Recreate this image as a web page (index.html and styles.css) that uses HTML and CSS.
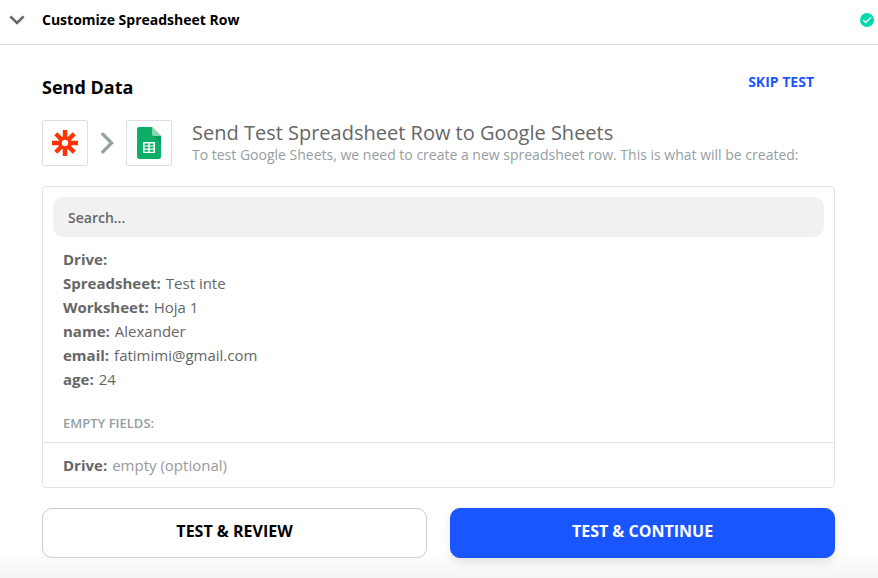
FILE: index.html
```html
<!DOCTYPE html>
<html lang="en">
<head>
<meta charset="utf-8">
<title>Send Data</title>
<link rel="stylesheet" href="styles.css">
</head>
<body>
<header class="step-header">
  <button class="step-toggle" type="button">
    <svg class="chevron" width="16" height="10" viewBox="0 0 16 10" aria-hidden="true"><path d="M1.300 1.300 8 8l6.700-6.700" fill="none" stroke="#666" stroke-width="2.600"/></svg>
    <span>Customize Spreadsheet Row</span>
  </button>
  <svg class="status" width="14" height="14" viewBox="0 0 14 14" aria-hidden="true"><circle cx="7" cy="7" r="7" fill="#00d9ae"/><path d="M3 7 5.700 9.500 11 4.200" fill="none" stroke="#fff" stroke-width="1.300"/></svg>
</header>
<main class="panel">
  <div class="title-row">
    <h1 class="title">Send Data</h1>
    <a class="skip" href="#">SKIP TEST</a>
  </div>
  <section class="intro">
    <span class="app-icon">
      <svg width="26" height="26" viewBox="0 0 26 26" aria-hidden="true">
        <path d="M13 0v9M13 17v9M0 13h9M17 13h9M3.800 3.800l6.400 6.400M15.800 15.800l6.400 6.400M22.200 3.800l-6.400 6.400M10.200 15.800l-6.400 6.400" stroke="#ff3300" stroke-width="4.400"/>
        <circle cx="13" cy="13" r="5" fill="none" stroke="#ff3300" stroke-width="3.600"/>
      </svg>
    </span>
    <svg class="arrow" width="14" height="22" viewBox="0 0 14 22" aria-hidden="true"><path d="M2.800 2.200 11.600 11 2.800 19.800" fill="none" stroke="#959ea2" stroke-width="3.300" stroke-linecap="round"/></svg>
    <span class="app-icon">
      <svg width="24" height="32" viewBox="0 0 24 32" aria-hidden="true">
        <path d="M2.200 0H15l9 9v20.800A2.200 2.200 0 0 1 21.800 32H2.200A2.200 2.200 0 0 1 0 29.800V2.200A2.200 2.200 0 0 1 2.200 0z" fill="#0caf66"/>
        <path d="M15.600 8.400 24 16.500V9z" fill="#089b59"/>
        <path d="M15 0l9 9h-7a2 2 0 0 1-2-2z" fill="#8bd6b2"/>
        <path d="M6 15h12v11H6zM7.500 16.500v2h3.800v-2zm5.200 0v2h3.800v-2zM7.500 19.600v2h3.800v-2zm5.200 0v2h3.800v-2zM7.500 22.700v2h3.800v-2zm5.200 0v2h3.800v-2z" fill="#fff" fill-rule="evenodd"/>
      </svg>
    </span>
    <div class="intro-text">
      <h2 class="intro-title">Send Test Spreadsheet Row to Google Sheets</h2>
      <p class="intro-note">To test Google Sheets, we need to create a new spreadsheet row. This is what will be created:</p>
    </div>
  </section>
  <section class="card">
    <input class="search" type="text" placeholder="Search..." aria-label="Search">
    <dl class="fields">
      <div><dt>Drive:</dt></div>
      <div><dt>Spreadsheet:</dt><dd>Test inte</dd></div>
      <div><dt>Worksheet:</dt><dd>Hoja 1</dd></div>
      <div><dt>name:</dt><dd>Alexander</dd></div>
      <div><dt>email:</dt><dd>fatimimi@gmail.com</dd></div>
      <div><dt>age:</dt><dd>24</dd></div>
    </dl>
    <h3 class="empty-title">EMPTY FIELDS:</h3>
    <dl class="fields empty">
      <div><dt>Drive:</dt><dd>empty (optional)</dd></div>
    </dl>
  </section>
  <div class="actions">
    <button class="btn" type="button">TEST &amp; REVIEW</button>
    <button class="btn primary" type="button">TEST &amp; CONTINUE</button>
  </div>
</main>
</body>
</html>
```
FILE: styles.css
```css
* { box-sizing: border-box; }
body, h1, h2, h3, p, dl, dd { margin: 0; }
body {
  font-family: "Open Sans", sans-serif;
  font-size: 15px;
  line-height: 24px;
  color: #666;
  background: #fff;
}
button, input { font: inherit; }
.step-header {
  display: flex;
  justify-content: space-between;
  align-items: center;
  height: 45px;
  padding: 0 4px 5px 9px;
  border-bottom: 1px solid #d9dde1;
}
.step-toggle {
  display: flex;
  align-items: center;
  gap: 17px;
  padding: 0;
  border: 0;
  background: none;
  color: #000;
  font-size: 14px;
  font-weight: 700;
}
.panel {
  padding: 24px 43px 20px 42px;
  background: linear-gradient(to top, #f4f4f4, #fff 28px);
}
.title-row {
  display: flex;
  justify-content: space-between;
  align-items: flex-start;
  padding-right: 21px;
}
.title {
  padding-top: 5px;
  color: #000;
  font-size: 18px;
  line-height: 26px;
  font-weight: 700;
}
.skip {
  padding-top: 1px;
  color: #1a56ff;
  font-size: 14px;
  font-weight: 700;
  text-decoration: none;
}
.intro {
  display: flex;
  align-items: center;
  margin-top: 20px;
}
.app-icon {
  display: flex;
  flex: none;
  align-items: center;
  justify-content: center;
  width: 46px;
  height: 46px;
  border: 1px solid #dbdfe2;
  border-radius: 2px;
}
.arrow { flex: none; margin: 0 12px; }
.intro-text { margin-left: 20px; }
.intro-title {
  font-size: 20px;
  line-height: 24px;
  font-weight: 400;
}
.intro-note {
  color: #959ea2;
  font-size: 14px;
  line-height: 20px;
}
.card {
  margin-top: 20px;
  padding-top: 10px;
  border: 1px solid #dfe3e4;
  border-radius: 4px;
  background: #fff;
}
.search {
  display: block;
  width: calc(100% - 20px);
  height: 40px;
  margin: 0 10px;
  padding: 0 15px;
  border: 0;
  border-radius: 10px;
  background: #f1f1f1;
  font-size: 14px;
  font-weight: 600;
}
.search::placeholder { color: #666; opacity: 1; }
.fields { padding: 10px 20px 0; }
.fields dt, .fields dd { display: inline; }
.fields dt { font-weight: 700; }
.fields dd { margin-left: 5px; }
.empty-title {
  padding: 22px 20px 9px;
  border-bottom: 1px solid #dfe3e4;
  color: #959ea2;
  font-size: 13px;
  line-height: 20px;
  font-weight: 600;
}
.fields.empty { padding-bottom: 10px; }
.empty dd { color: #999; }
.actions {
  display: grid;
  grid-template-columns: 1fr 1fr;
  gap: 23px;
  margin-top: 20px;
}
.btn {
  height: 50px;
  padding: 0 16px 4px;
  border: 1px solid #ccc;
  border-radius: 10px;
  background: #fff;
  color: #000;
  font-size: 16px;
  font-weight: 700;
}
.primary {
  border-color: #1a56ff;
  background: #1a56ff;
  color: #fff;
  box-shadow: 0 4px 8px rgba(0, 0, 0, 0.1);
}
```
